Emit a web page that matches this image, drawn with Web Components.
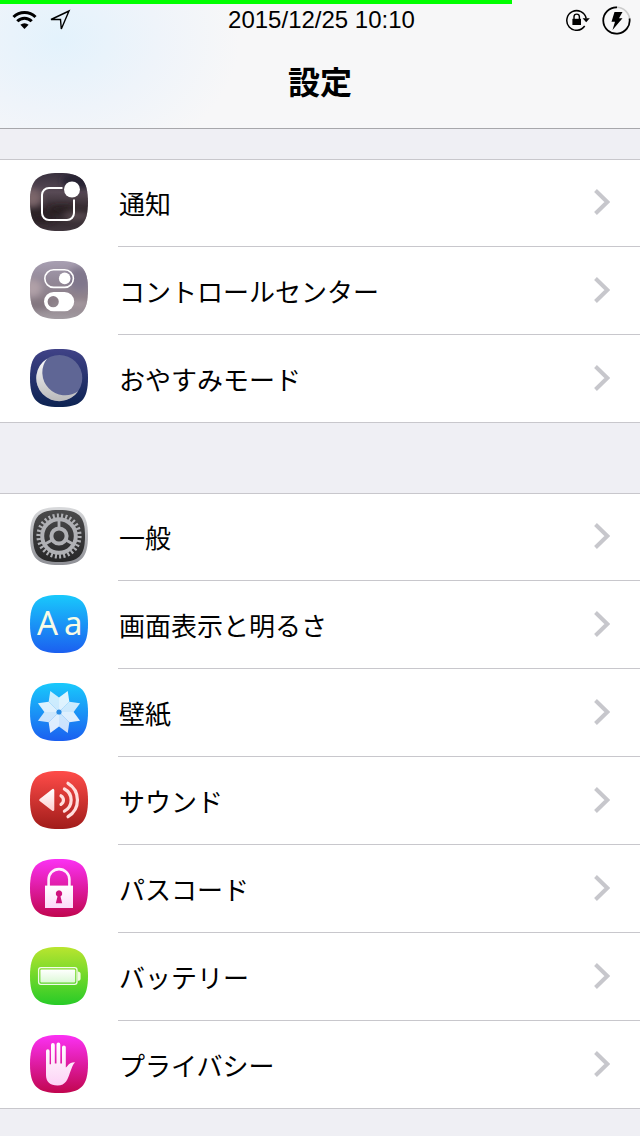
<!DOCTYPE html>
<html lang="ja">
<head>
<meta charset="utf-8">
<meta name="viewport" content="width=device-width, initial-scale=1">
<title>設定</title>
<style>
  :root {
    --page-bg: #efeff4;
    --line: #c8c7cc;
    --chevron: #c7c7cc;
  }
  body {
    margin: 0;
    background: var(--page-bg);
    color: #000;
    font-family: "Noto Sans CJK JP", sans-serif;
  }
</style>
</head>
<body>
<settings-app>
  <status-bar slot="header" level="80">2015/12/25 10:10</status-bar>
  <nav-title slot="header">設定</nav-title>

  <settings-group>
    <settings-row icon="notify">通知</settings-row>
    <settings-row icon="control">コントロールセンター</settings-row>
    <settings-row icon="moon">おやすみモード</settings-row>
  </settings-group>

  <settings-group>
    <settings-row icon="gear">一般</settings-row>
    <settings-row icon="display">画面表示と明るさ</settings-row>
    <settings-row icon="wallpaper">壁紙</settings-row>
    <settings-row icon="sound">サウンド</settings-row>
    <settings-row icon="lock">パスコード</settings-row>
    <settings-row icon="battery">バッテリー</settings-row>
    <settings-row icon="hand">プライバシー</settings-row>
  </settings-group>
</settings-app>

<script>
// Tile outline shared by all app icons, on a 58x58 canvas
const TILE = 'M29 0C51 0 58 7 58 29S51 58 29 58 0 51 0 29 7 0 29 0Z';

const petals = () => {
  let out = '';
  for (let i = 0; i < 8; i++) {
    out += `<path transform="translate(29 29) rotate(${22.5 + i * 45})" fill="#fff" fill-opacity="${i % 2 ? 0.78 : 0.86}" d="M0 0L-5.6 -13.5L0 -22.8L5.6 -13.5Z"/>`;
  }
  return out;
};

// bg: gradient stops from top to bottom, art: what is drawn over the tile
const ICONS = {
  notify: {
    bg: ['#39313f', '#584a55', '#2b2226', '#40363d'],
    art: `
      <g clip-path="url(#clip)"><g filter="url(#soft)">
        <ellipse cx="2" cy="25" rx="10" ry="9" fill="#7b666b"/>
        <ellipse cx="48" cy="8" rx="16" ry="8" fill="#282433"/>
        <ellipse cx="32" cy="36" rx="14" ry="3" fill="#251b1e"/>
        <ellipse cx="47" cy="43" rx="14" ry="4" fill="#5b4d53"/>
        <ellipse cx="12" cy="46" rx="13" ry="4" fill="#271d23"/>
      </g></g>
      <path d="M32.5 15H19a7 7 0 0 0-7 7v18a7 7 0 0 0 7 7h18a7 7 0 0 0 7-7V26.5" fill="none" stroke="#fff" stroke-width="2"/>
      <circle cx="42" cy="16.5" r="8" fill="#fff"/>`
  },
  control: {
    bg: ['#a89fb2', '#938998', '#8b7e87', '#a39ca2'],
    art: `
      <g clip-path="url(#clip)"><g filter="url(#soft)">
        <ellipse cx="2" cy="27" rx="10" ry="9" fill="#b0a0a7"/>
        <ellipse cx="50" cy="18" rx="12" ry="12" fill="#80778c"/>
        <ellipse cx="8" cy="44" rx="14" ry="4" fill="#7f727b"/>
        <ellipse cx="48" cy="43" rx="14" ry="4" fill="#a69aa0"/>
      </g></g>
      <rect x="14.8" y="8.8" width="28.6" height="17.6" rx="8.8" fill="none" stroke="#fff" stroke-width="1.6"/>
      <circle cx="34.7" cy="17.4" r="5.8" fill="#fff"/>
      <path fill="#fff" fill-rule="evenodd" d="M23.6 31h11a9.6 9.6 0 0 1 0 19.2h-11a9.6 9.6 0 0 1 0-19.2ZM23.2 35.1a5.6 5.6 0 1 0 0 11.2a5.6 5.6 0 1 0 0-11.2Z"/>`
  },
  moon: {
    bg: ['#404287', '#0d2352'],
    art: `
      <circle cx="29.3" cy="29" r="23" fill="#5f6695"/>
      <path fill="url(#glyph)" d="M17 9.7A23 23 0 1 0 48.2 42.2A22.8 22.8 0 0 1 17 9.7Z"/>`,
    glyph: ['#fafafa', '#b9b9bb']
  },
  gear: {
    bg: ['#d9dadc', '#8e8f95'],
    art: `
      <path transform="translate(3 3) scale(.897)" d="${TILE}" fill="url(#glyph)"/>
      <g fill="none" stroke="#b0b1b5">
        <circle cx="29" cy="29" r="20.4" stroke-width="4.4" pathLength="120" stroke-dasharray="1.9 2.1"/>
        <circle cx="29" cy="29" r="16.8" stroke-width="4"/>
        <circle cx="29" cy="29" r="7.6" stroke-width="4"/>
        <path stroke-width="2.8" d="M29 21V13M22.1 33l-7 4M35.9 33l7 4"/>
      </g>`,
    glyph: ['#4b4b4c', '#272728']
  },
  display: {
    bg: ['#19c9fc', '#1b5ff0'],
    art: `<g fill="#f8fbe6" font-family="Noto Sans, sans-serif" font-size="33"><text x="7" y="40">A</text><text x="34" y="40">a</text></g>`
  },
  wallpaper: {
    bg: ['#19c9fc', '#1b5ff0'],
    art: petals() + '<circle cx="29" cy="29" r="2.6" fill="#2a8de6"/>'
  },
  sound: {
    bg: ['#ff4c49', '#a11c1a'],
    art: `
      <path d="M10.5 29L23 19.2V38.8Z" fill="url(#glyph)" stroke="url(#glyph)" stroke-width="2.6" stroke-linejoin="round"/>
      <g fill="none" stroke="#ffdedd" stroke-width="3.2" stroke-linecap="round">
        <path d="M31 24.8A5 5 0 0 1 31 33.4"/>
        <path d="M34.4 18A12.5 12.5 0 0 1 34.4 40.2"/>
        <path d="M38 12.3A19.5 19.5 0 0 1 38 45.7"/>
      </g>`,
    glyph: ['#fff', '#ffd0d0']
  },
  lock: {
    bg: ['#fb31f4', '#c1064f'],
    art: `
      <path d="M18.6 27V20.5a10.4 10.4 0 0 1 20.8 0V27" fill="none" stroke="#fff0fe" stroke-width="2.6"/>
      <rect x="15" y="26.6" width="28" height="22.4" fill="url(#glyph)"/>
      <path d="M29 31.3a3.3 3.3 0 0 1 1.5 6.2l1.7 6.8h-6.4l1.7-6.8A3.3 3.3 0 0 1 29 31.3Z" fill="#cf127e"/>`,
    glyph: ['#fff', '#fcdafa']
  },
  battery: {
    bg: ['#b9e52f', '#27cb27'],
    art: `
      <rect x="8.6" y="20.6" width="38.4" height="16.8" rx="2.4" fill="none" stroke="#fff" stroke-opacity=".9" stroke-width="1.3"/>
      <rect x="10.4" y="22.4" width="34.8" height="13.2" rx="1" fill="url(#glyph)"/>
      <path d="M47.6 24.6c2 0 3 1 3 2.4v4.4c0 1.4-1 2.4-3 2.4Z" fill="#effbe0"/>`,
    glyph: ['#fff', '#dcf9d6']
  },
  hand: {
    bg: ['#fb31f4', '#c1064f'],
    art: `<path fill="url(#glyph)" d="M16 16a1.8 1.8 0 0 1 3.6 0V29.3H21V10a1.9 1.9 0 0 1 3.8 0V28.5H26.5V9.4a1.9 1.9 0 0 1 3.8 0V28.5H32V12.3a1.9 1.9 0 0 1 3.8 0V32.5C38 31.5 38.3 27 45 27.2C42.5 29.5 42 33 40 37.5C37.8 44 36 50.5 27.5 50.5C20 50.5 16 46.5 16 40Z"/>`,
    glyph: ['#fff', '#fcd3f6']
  }
};

const stops = (colors) => colors
  .map((c, i) => `<stop offset="${Math.round(i * 100 / (colors.length - 1))}%" stop-color="${c}"/>`)
  .join('');

class AppIcon extends HTMLElement {
  constructor() {
    super();
    this.attachShadow({ mode: 'open' });
  }

  connectedCallback() {
    const icon = ICONS[this.getAttribute('name')];
    if (!icon) return;
    this.shadowRoot.innerHTML = `
      <style>
        :host { display: block; flex: none; width: 58px; height: 58px; }
        svg { display: block; width: 100%; height: 100%; }
      </style>
      <svg viewBox="0 0 58 58" aria-hidden="true">
        <defs>
          <linearGradient id="bg" x2="0" y2="1">${stops(icon.bg)}</linearGradient>
          <linearGradient id="glyph" x2="0" y2="1">${stops(icon.glyph || ['#fff', '#fff'])}</linearGradient>
          <clipPath id="clip"><path d="${TILE}"/></clipPath>
          <filter id="soft" x="-30%" y="-30%" width="160%" height="160%"><feGaussianBlur stdDeviation="3"/></filter>
        </defs>
        <path d="${TILE}" fill="url(#bg)"/>
        ${icon.art}
      </svg>
    `;
  }
}

class SettingsRow extends HTMLElement {
  constructor() {
    super();
    this.attachShadow({ mode: 'open' });
  }

  connectedCallback() {
    const name = this.getAttribute('icon');
    this.shadowRoot.innerHTML = `
      <style>
        :host { display: block; }
        a {
          display: flex; gap: 30px;
          padding-left: 30px;
          color: inherit; text-decoration: none;
        }
        app-icon { margin: 14px 0 16px; }
        .body {
          flex: 1; min-width: 0;
          display: flex; align-items: center; justify-content: space-between;
          padding: 0 30px 2px 1px;
          border-bottom: 1px solid var(--line);
        }
        :host(:last-of-type) .body { border-bottom-color: transparent; }
        .label { padding-top: 2px; font-size: 26px; line-height: 36px; }
        .chevron { flex: none; width: 16px; height: 26px; }
      </style>
      <a href="#${name}">
        <app-icon name="${name}"></app-icon>
        <span class="body">
          <span class="label"><slot></slot></span>
          <svg class="chevron" viewBox="0 0 16 26" aria-hidden="true"><path d="M1.5 1.5L13.3 13L1.5 24.5" fill="none" stroke="var(--chevron)" stroke-width="4"/></svg>
        </span>
      </a>
    `;
  }
}

class SettingsGroup extends HTMLElement {
  constructor() {
    super();
    this.attachShadow({ mode: 'open' });
    this.shadowRoot.innerHTML = `
      <style>
        :host {
          display: block;
          background: #fff;
          box-shadow: inset 0 1px var(--line), inset 0 -1px var(--line);
        }
      </style>
      <slot></slot>
    `;
  }
}

class StatusBar extends HTMLElement {
  constructor() {
    super();
    this.attachShadow({ mode: 'open' });
  }

  connectedCallback() {
    this.shadowRoot.innerHTML = `
      <style>
        :host { display: block; }
        .level { height: 4px; width: ${this.getAttribute('level')}%; background: #0f0; }
        .bar {
          display: grid; grid-template-columns: 1fr auto 1fr; align-items: center;
          height: 32px;
          padding: 0 9px 0 12px;
        }
        .side { display: flex; align-items: center; gap: 12px; }
        .end { justify-content: flex-end; }
        .time { font-family: "Liberation Sans", sans-serif; font-size: 24px; line-height: 32px; white-space: nowrap; }
        svg { display: block; flex: none; }
      </style>
      <div class="level"></div>
      <div class="bar">
        <div class="side">
          <svg width="25" height="20" viewBox="0 0 25 20" role="img" aria-label="Wi-Fi">
            <g fill="none" stroke="#000" stroke-width="3">
              <path d="M1.5 7A15.5 15.5 0 0 1 23.5 7"/>
              <path d="M5.3 11.3A10 10 0 0 1 19.7 11.3"/>
            </g>
            <path d="M12.5 19L8.4 14.8A6 6 0 0 1 16.6 14.8Z"/>
          </svg>
          <svg width="22" height="22" viewBox="0 0 22 22" role="img" aria-label="位置情報">
            <path d="M20 2L2 10.5H11.5L12.3 20Z" fill="none" stroke="#000" stroke-width="1.4"/>
          </svg>
        </div>
        <time class="time"><slot></slot></time>
        <div class="side end">
          <svg width="24" height="22" viewBox="0 0 24 22" role="img" aria-label="画面の向きをロック">
            <path d="M18.7 17A9.8 9.8 0 1 1 20.2 9.5" fill="none" stroke="#000" stroke-width="1.5"/>
            <path d="M16.6 9.3H23.8L20.2 13.3Z"/>
            <rect x="6.4" y="9.8" width="8.6" height="6.2"/>
            <path d="M8 10V7.8a2.7 2.7 0 0 1 5.4 0V10" fill="none" stroke="#000" stroke-width="1.4"/>
          </svg>
          <svg width="29" height="29" viewBox="0 0 29 29" role="img" aria-label="充電中">
            <circle cx="14.5" cy="14.5" r="13.2" fill="none" stroke="#ccc" stroke-width="1.6"/>
            <path d="M27.5 12.5A13.2 13.2 0 1 1 15 1.3" fill="none" stroke="#000" stroke-width="1.7"/>
            <path d="M12.5 6H20.5L17 12.2H20.5L10.5 24L13 15.8H9.5Z"/>
          </svg>
        </div>
      </div>
    `;
  }
}

class NavTitle extends HTMLElement {
  constructor() {
    super();
    this.attachShadow({ mode: 'open' });
    this.shadowRoot.innerHTML = `
      <style>
        :host { display: block; }
        h1 {
          margin: 0; padding: 20px 16px 24px;
          font-size: 32px; font-weight: 700; line-height: 48px;
          text-align: center;
        }
      </style>
      <h1><slot></slot></h1>
    `;
  }
}

class SettingsApp extends HTMLElement {
  constructor() {
    super();
    this.attachShadow({ mode: 'open' });
    this.shadowRoot.innerHTML = `
      <style>
        :host { display: block; }
        header {
          background: radial-gradient(ellipse 180px 130px at 60px 40px, #e3f2fc, #eff4fa 55%, #f7f7f8);
          border-bottom: 1px solid #a7a7ab;
        }
        main {
          display: flex; flex-direction: column; gap: 70px;
          padding: 30px 0 27px;
        }
      </style>
      <header><slot name="header"></slot></header>
      <main><slot></slot></main>
    `;
  }
}

customElements.define('app-icon', AppIcon);
customElements.define('settings-row', SettingsRow);
customElements.define('settings-group', SettingsGroup);
customElements.define('status-bar', StatusBar);
customElements.define('nav-title', NavTitle);
customElements.define('settings-app', SettingsApp);
</script>
</body>
</html>
